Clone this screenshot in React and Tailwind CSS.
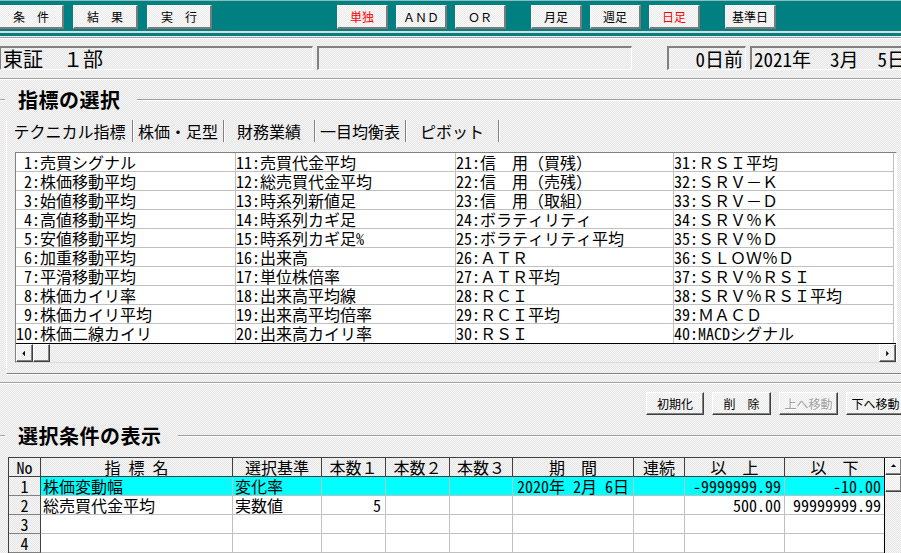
import React from "react";

const F = "font-['Noto_Sans_Mono_CJK_JP','Noto_Sans_CJK_JP',sans-serif] font-[350]";
const TEX =
  "bg-[#eeeeee] bg-[image:repeating-conic-gradient(#e5e5e5_0%_25%,#f6f6f6_0%_50%)] bg-[length:2px_2px]";
const TEXB =
  "bg-[#f2f2f2] bg-[image:repeating-conic-gradient(#eaeaea_0%_25%,#fbfbfb_0%_50%)] bg-[length:2px_2px]";
const ETCH = "h-[2px] border-t border-t-[#a0a0a0] border-b border-b-white";

const toolbar = [
  { t: "条　件", c: "w-[65px] ml-[-1px]" },
  { t: "結　果", c: "w-[65px] ml-[9px]" },
  { t: "実　行", c: "w-[65px] ml-[9px]" },
  { t: "単独", c: "w-[51px] ml-[125px] text-[#ff0000]" },
  { t: "ＡＮＤ", c: "w-[51px] ml-[8px]" },
  { t: "ＯＲ", c: "w-[51px] ml-[8px]" },
  { t: "月足", c: "w-[51px] ml-[25px]" },
  { t: "週足", c: "w-[51px] ml-[8px]" },
  { t: "日足", c: "w-[51px] ml-[8px] text-[#ff0000]" },
  { t: "基準日", c: "w-[51px] ml-[25px]" },
];

const listCols = [
  {
    w: "w-[220px]",
    items: [
      " 1:売買シグナル",
      " 2:株価移動平均",
      " 3:始値移動平均",
      " 4:高値移動平均",
      " 5:安値移動平均",
      " 6:加重移動平均",
      " 7:平滑移動平均",
      " 8:株価カイリ率",
      " 9:株価カイリ平均",
      "10:株価二線カイリ",
    ],
  },
  {
    w: "w-[220px]",
    items: [
      "11:売買代金平均",
      "12:総売買代金平均",
      "13:時系列新値足",
      "14:時系列カギ足",
      "15:時系列カギ足%",
      "16:出来高",
      "17:単位株倍率",
      "18:出来高平均線",
      "19:出来高平均倍率",
      "20:出来高カイリ率",
    ],
  },
  {
    w: "w-[218px]",
    items: [
      "21:信　用（買残）",
      "22:信　用（売残）",
      "23:信　用（取組）",
      "24:ボラティリティ",
      "25:ボラティリティ平均",
      "26:ＡＴＲ",
      "27:ＡＴＲ平均",
      "28:ＲＣＩ",
      "29:ＲＣＩ平均",
      "30:ＲＳＩ",
    ],
  },
  {
    w: "w-[220px]",
    items: [
      "31:ＲＳＩ平均",
      "32:ＳＲＶ－Ｋ",
      "33:ＳＲＶ－Ｄ",
      "34:ＳＲＶ％Ｋ",
      "35:ＳＲＶ％Ｄ",
      "36:ＳＬＯＷ％Ｄ",
      "37:ＳＲＶ％ＲＳＩ",
      "38:ＳＲＶ％ＲＳＩ平均",
      "39:ＭＡＣＤ",
      "40:MACDシグナル",
    ],
  },
];

const tabs = [
  { t: "テクニカル指標", c: "w-[127px] border-l border-l-white" },
  { t: "株価・足型", c: "w-[91px]" },
  { t: "財務業績", c: "w-[91px]" },
  { t: "一目均衡表", c: "w-[91px]" },
  { t: "ピボット", c: "w-[93px]" },
];

const headers = [
  "No",
  "指 標 名",
  "選択基準",
  "本数１",
  "本数２",
  "本数３",
  "期　間",
  "連続",
  "以　上",
  "以　下",
];

const align = [
  "text-left pl-[2px]",
  "text-left pl-[2px]",
  "text-right pr-[4px]",
  "text-right pr-[4px]",
  "text-right pr-[4px]",
  "text-center",
  "text-center",
  "text-right pr-[3px]",
  "text-right pr-[3px]",
];

const rows = [
  {
    no: "1",
    hi: true,
    cells: ["株価変動幅", "変化率", "", "", "", "2020年 2月 6日", "", "-9999999.99", "-10.00"],
  },
  {
    no: "2",
    cells: ["総売買代金平均", "実数値", "5", "", "", "", "", "500.00", "99999999.99"],
  },
  { no: "3", cells: ["", "", "", "", "", "", "", "", ""] },
  { no: "4", cells: ["", "", "", "", "", "", "", "", ""] },
  { no: "5", cells: ["", "", "", "", "", "", "", "", ""] },
];

function Arrow({ dir }) {
  const pts = {
    left: "6,8.5 9,5.5 9,11.5",
    right: "10,8.5 7,5.5 7,11.5",
    up: "8.5,6 5.5,9 11.5,9",
  }[dir];
  return (
    <svg width="15" height="15" viewBox="0 0 17 17" className="block">
      <polygon points={pts} fill="#000" />
    </svg>
  );
}

function SBtn({ dir, className = "" }) {
  return (
    <div
      className={`${TEXB} ${className} flex items-center justify-center border-t border-l border-t-white border-l-white border-r border-b border-r-[#404040] border-b-[#404040] shadow-[inset_-1px_-1px_0_#808080]`}
    >
      {dir ? <Arrow dir={dir} /> : null}
    </div>
  );
}

function GroupLabel({ children }) {
  return (
    <div className="h-[20px] flex items-center">
      <div className={`w-[5px] ${ETCH}`} />
      <span className="pl-[13px] pr-[16px] text-[20px] leading-[20px] font-bold tracking-[0.5px] whitespace-nowrap">
        {children}
      </span>
      <div className={`flex-1 ${ETCH}`} />
    </div>
  );
}

export default function App() {
  return (
    <div className={`w-[901px] h-[553px] overflow-hidden ${TEX} ${F} text-black`}>
      {/* toolbar */}
      <div className="h-[31px] bg-[#008080] border-t border-t-[#8fbdbd] flex items-start pt-[4px]">
        {toolbar.map((b, i) => (
          <div
            key={i}
            className={`${b.c} ${TEXB} shrink-0 h-[24px] flex items-center justify-center text-[12px] leading-[16px] border-t border-l border-t-white border-l-white border-r-2 border-b-2 border-r-[#7a7a7a] border-b-[#7a7a7a]`}
          >
            {b.t}
          </div>
        ))}
      </div>
      <div className="h-[2px] bg-[#dcdcdc]" />
      <div className="h-[3px] bg-[#008080]" />

      <div className={`mt-[1px] ${ETCH}`} />

      {/* info fields */}
      <div className="mt-[7px] h-[24px] flex overflow-hidden">
        <div className="shrink-0 ml-[-1px] w-[314px] h-full flex items-center pl-[2px] text-[20px] leading-[21px] border-t-2 border-l-2 border-t-[#808080] border-l-[#808080] border-b border-r border-b-white border-r-white whitespace-pre">
          東証　１部
        </div>
        <div className="shrink-0 ml-[4px] w-[315px] h-full border-t-2 border-l-2 border-t-[#808080] border-l-[#808080] border-b border-r border-b-white border-r-white" />
        <div className="shrink-0 ml-[35px] w-[79px] h-full flex items-center justify-end pr-[2px] text-[19px] leading-[21px] border-t-2 border-l-2 border-t-[#808080] border-l-[#808080] border-b border-r border-b-white border-r-white whitespace-pre">
          0日前
        </div>
        <div className="shrink-0 ml-[4px] w-[170px] h-full flex items-center pl-[2px] text-[19px] leading-[21px] border-t-2 border-l-2 border-t-[#808080] border-l-[#808080] border-b border-r border-b-white border-r-white whitespace-pre">
          2021年　3月　5日
        </div>
      </div>

      <div className={`mt-[8px] ${ETCH}`} />

      {/* group 1 */}
      <div className="mt-[10px]">
        <GroupLabel>指標の選択</GroupLabel>
      </div>

      {/* tab control */}
      <div className="mt-[10px] ml-[6px]">
        <div className="h-[22px] flex items-stretch">
          {tabs.map((t, i) => (
            <div
              key={i}
              className={`${t.c} shrink-0 flex items-center justify-center text-[16px] leading-[18px] whitespace-nowrap border-r border-r-[#808080] shadow-[1px_0_0_#ffffff]`}
            >
              {t.t}
            </div>
          ))}
        </div>
        <div className="h-[232px] border-l border-l-white border-b border-b-[#808080] shadow-[0_1px_0_#ffffff] pt-[10px] pl-[8px]">
          {/* list box */}
          <div className="w-[882px] h-[211px] flex flex-col border-t border-l border-t-[#808080] border-l-[#808080] border-r border-b border-r-white border-b-[#dcdcdc] shadow-[inset_1px_1px_0_#404040]">
            <div className="h-[191px] flex bg-white border-b border-b-black">
              {listCols.map((col, ci) => (
                <div key={ci} className={`${col.w} shrink-0 flex flex-col border-r border-r-[#c0c0c0]`}>
                  {col.items.map((it, ii) => (
                    <div
                      key={ii}
                      className="h-[19px] shrink-0 border-b border-b-[#c0c0c0] last:border-b-0 whitespace-pre text-[16px] leading-[18px] overflow-hidden"
                    >
                      {it}
                    </div>
                  ))}
                </div>
              ))}
              <div className="flex-1" />
            </div>
            <div className={`h-[18px] flex ${TEX}`}>
              <SBtn dir="left" className="w-[17px] h-[18px] shrink-0" />
              <SBtn className="w-[17px] h-[18px] shrink-0" />
              <div className="flex-1" />
              <SBtn dir="right" className="w-[17px] h-[18px] shrink-0" />
            </div>
          </div>
        </div>
      </div>

      <div className={`mt-[8px] ${ETCH}`} />

      {/* action buttons */}
      <div className="mt-[8px] h-[23px] flex gap-[8px] pl-[646px]">
        {[
          { t: "初期化", c: "w-[58px]" },
          { t: "削　除", c: "w-[59px]" },
          { t: "上へ移動", c: "w-[59px] text-[#a0a0a0] [text-shadow:1px_1px_0_#ffffff]" },
          { t: "下へ移動", c: "w-[59px]" },
        ].map((b, i) => (
          <div
            key={i}
            className={`${b.c} ${TEXB} shrink-0 h-[23px] flex items-center justify-center text-[12px] leading-[16px] whitespace-nowrap border-t border-l border-t-white border-l-white border-r border-b border-r-[#404040] border-b-[#404040] shadow-[inset_-1px_-1px_0_#808080]`}
          >
            {b.t}
          </div>
        ))}
      </div>

      {/* group 2 */}
      <div className="mt-[11px]">
        <GroupLabel>選択条件の表示</GroupLabel>
      </div>

      {/* table */}
      <div className="mt-[11px] ml-[8px] flex border-t border-l border-t-[#404040] border-l-[#404040]">
        <div className="grid grid-cols-[32px_192px_89px_64px_64px_63px_121px_51px_100px_99px] shrink-0">
          {headers.map((h, i) => (
            <div
              key={"h" + i}
              className={`${TEX} h-[19px] text-center text-[16px] leading-[18px] whitespace-pre overflow-hidden border-b border-b-[#404040] ${
                i < 9 ? "border-r border-r-[#404040]" : ""
              }`}
            >
              {h}
            </div>
          ))}
          {rows.map((r, ri) => (
            <React.Fragment key={"r" + ri}>
              <div
                className={`${TEX} h-[19px] text-center text-[16px] leading-[18px] overflow-hidden border-b border-b-[#808080] border-r border-r-[#404040]`}
              >
                {r.no}
              </div>
              {r.cells.map((c, ci) => (
                <div
                  key={ci}
                  className={`h-[19px] text-[16px] leading-[18px] whitespace-pre overflow-hidden border-b border-b-[#c0c0c0] ${
                    ci < 8 ? "border-r border-r-[#c0c0c0]" : ""
                  } ${r.hi ? "bg-[#00ffff]" : "bg-white"} ${align[ci]}`}
                >
                  {c}
                </div>
              ))}
            </React.Fragment>
          ))}
        </div>
        <div className={`flex-1 flex flex-col border-l border-l-black ${TEX}`}>
          <SBtn dir="up" className="h-[17px] w-full shrink-0" />
          <SBtn className="h-[17px] w-full shrink-0" />
          <div className="flex-1" />
        </div>
      </div>
    </div>
  );
}
